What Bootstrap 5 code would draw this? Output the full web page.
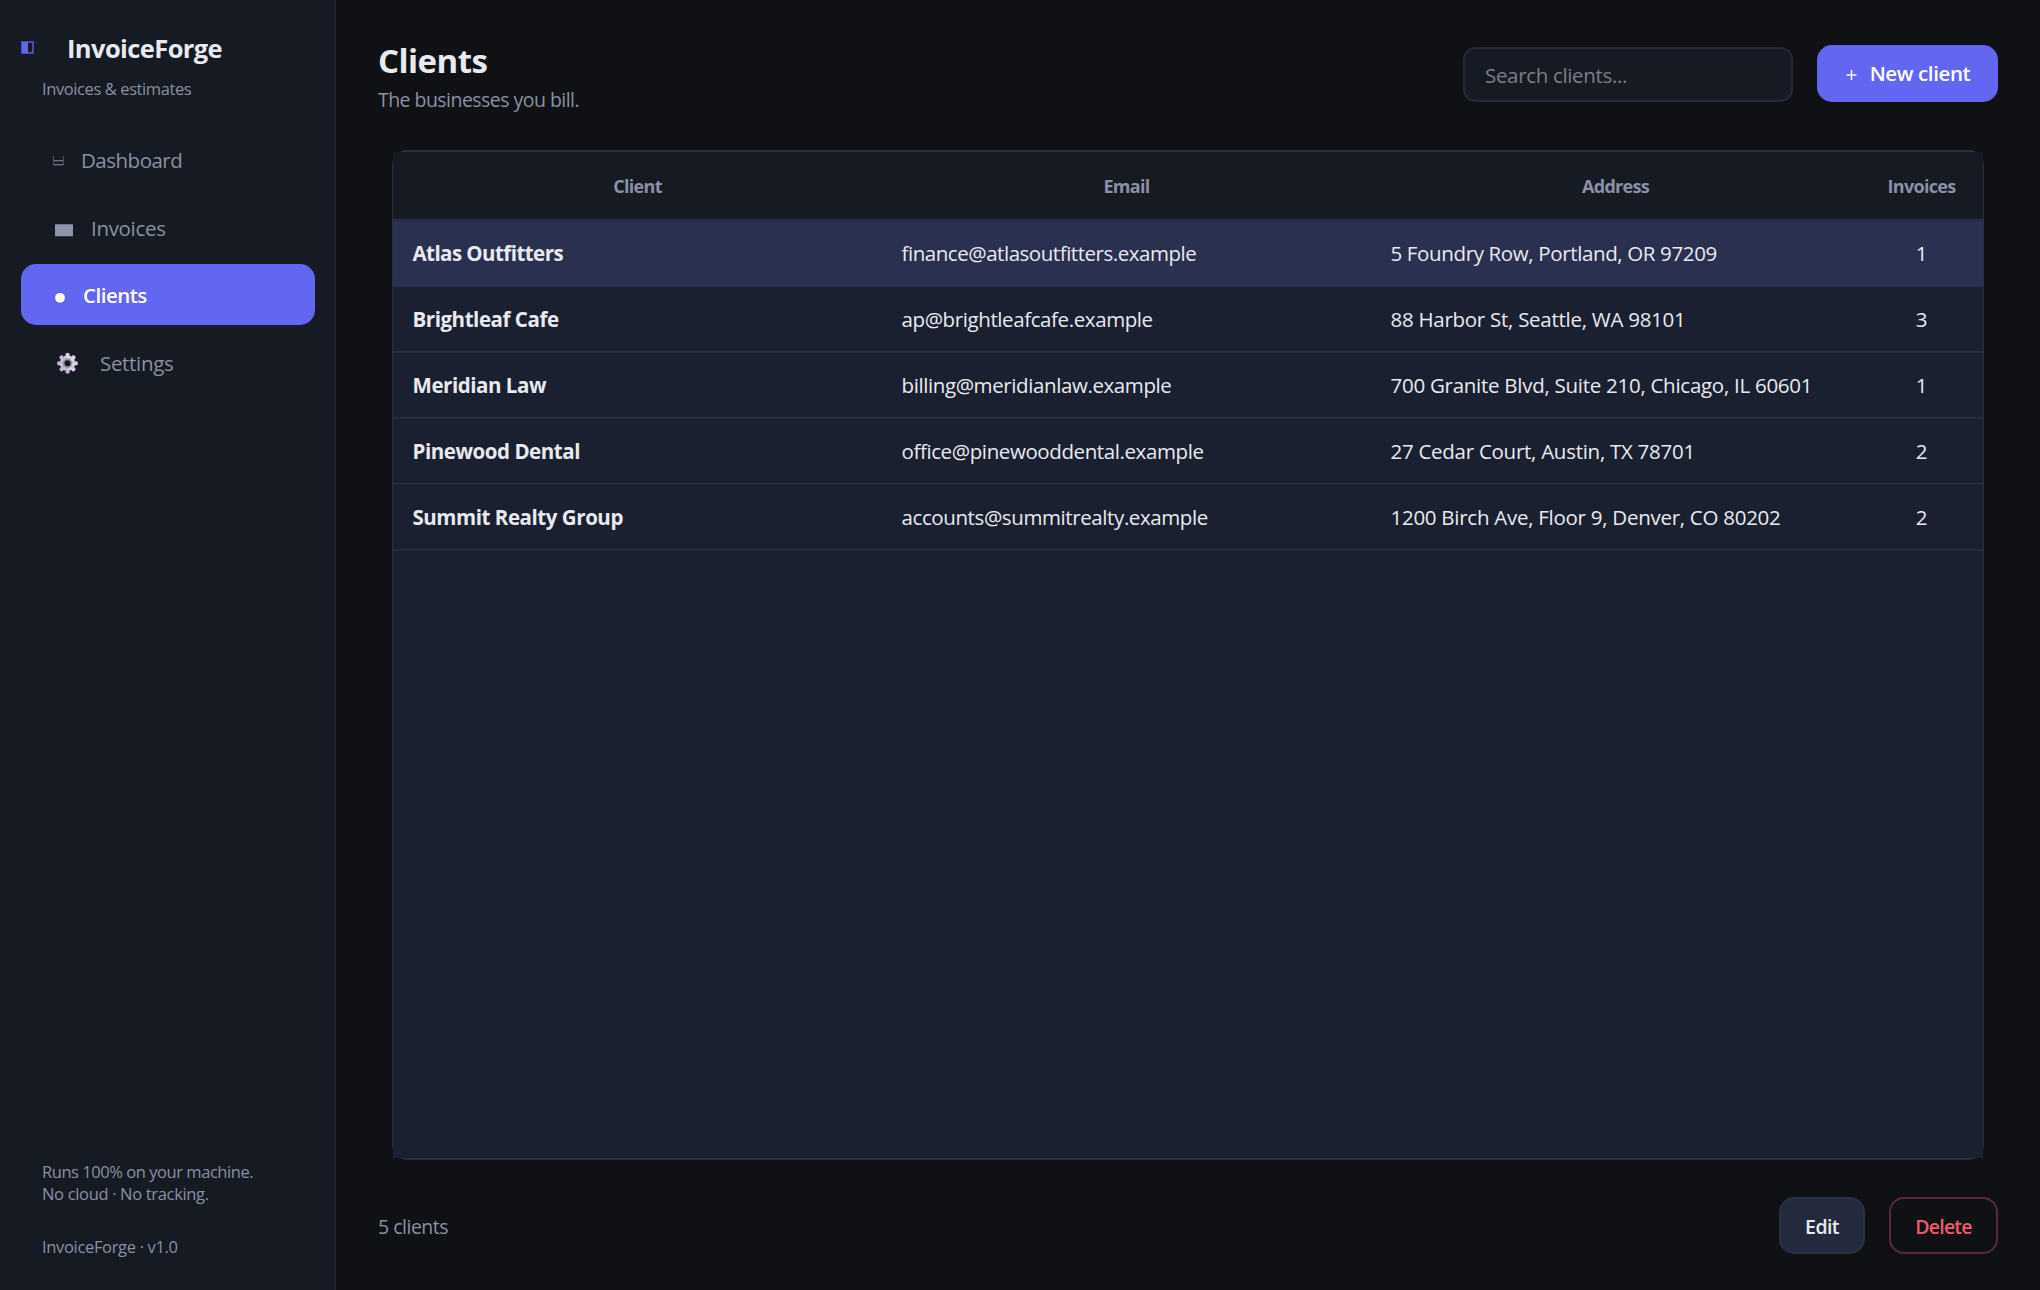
<!DOCTYPE html>
<html lang="en">
<head>
<meta charset="utf-8">
<meta name="viewport" content="width=device-width, initial-scale=1">
<title>InvoiceForge</title>
<link rel="stylesheet" href="https://cdn.jsdelivr.net/npm/bootstrap@5.3.0/dist/css/bootstrap.min.css">
<style>
  :root { --ink:#e8eaf0; --muted:#8b90a5; --line:#2a3042; --panel:#161a23; --accent:#6366f1; }
  body { background:#0f1115; color:var(--ink); font-family:"Open Sans","Noto Sans",sans-serif; font-size:20.5px; }
  .sidebar { width:336px; background:var(--panel); border-right:1px solid #232838; padding:30px 20px 32px 21px; }
  .brand-name { font-size:25.5px; font-weight:700; line-height:36px; letter-spacing:-.6px; }
  .brand-mark { width:46px; height:14px; }
  .fine { font-size:16.5px; line-height:22px; letter-spacing:-.45px; color:var(--muted); padding-left:21px; }
  .tagline { padding-top:12px; letter-spacing:-.4px; }
  .fine-loose { letter-spacing:-.33px; }
  .side-nav { margin-top:29px; gap:6px; }
  .side-nav .nav-link { height:61.5px; padding:1px 0 0 31px; color:var(--muted); line-height:30px; letter-spacing:-.32px; border-radius:15px; }
  .side-nav .nav-link:first-child { padding-top:0; letter-spacing:-.5px; }
  .side-nav .nav-link.active { height:61px; margin-bottom:.5px; padding-top:0; background:var(--accent); color:#fff; font-weight:600; letter-spacing:-.5px; }
  .page-pane { padding:0 42px 36px; }
  .page-head { height:150px; }
  .page-title { font-size:33px; font-weight:700; line-height:44px; letter-spacing:-.53px; padding-top:39px; margin:0; }
  .page-sub { font-size:19.5px; line-height:26px; letter-spacing:-.54px; color:var(--muted); padding-top:4px; }
  .controls { padding-top:45px; gap:24px; }
  .search { width:330px; height:55px; margin-top:2px; padding:0 20px; background:var(--panel)!important; border:2px solid #242a3a; border-radius:13px; font-size:20.5px; letter-spacing:-.33px; color:var(--ink); }
  .search::placeholder { color:#7b7e8a; opacity:1; }
  .btn { height:57px; border-radius:15px; font-weight:600; padding:0; line-height:1; }
  .btn-new { width:181px; background:var(--accent); color:#fff; font-size:20.5px; letter-spacing:-.38px; gap:13px; padding-left:1px; }
  .btn-edit { width:86px; background:#242a3d; border:2px solid #293044; color:var(--ink); font-size:19.5px; letter-spacing:-.6px; padding-top:2px; }
  .btn-del { width:109px; border:2px solid #5b2a34; color:#f2596b; font-size:19.5px; letter-spacing:-.75px; padding-top:2px; }
  .grid-frame { margin:0 14px; border:solid var(--line); border-width:2px 1px; border-radius:15px; }
  .grid-body { background:#1b2030; height:100%; }
  .clients { table-layout:fixed; margin:0; }
  .clients > :not(caption) > * > * { padding:0 0 0 19.5px; color:var(--ink); background:transparent; border:0; box-shadow:inset 0 -1px #242939, inset 0 -2px var(--line); }
  .clients > thead > tr > th { height:69px; padding:0 0 1px; background:var(--panel); color:var(--muted); font-size:18px; letter-spacing:-.7px; text-align:center; }
  .clients td { height:66px; line-height:30px; vertical-align:middle; padding-bottom:3px!important; letter-spacing:-.4px; }
  .clients td:nth-child(1) { font-weight:700; letter-spacing:-.45px; }
  .clients td:nth-child(3) { letter-spacing:-.27px; }
  .clients td:nth-child(4) { text-align:center; padding-left:0!important; }
  .clients .picked > td { background:#2a3050; box-shadow:inset 0 -2px #2b304c; letter-spacing:-.46px; }
  .clients .picked > td:first-child { letter-spacing:-.56px; }
  .clients .picked > td:nth-child(3) { letter-spacing:-.36px; }
  .page-foot { padding-top:37px; }
  .count { font-size:19.5px; letter-spacing:-.5px; color:var(--muted); padding-top:2px; }
</style>
<script src="https://cdn.jsdelivr.net/npm/bootstrap@5.3.0/dist/js/bootstrap.bundle.min.js"></script>
</head>
<body>
<div class="d-flex vh-100 overflow-hidden">
  <aside class="sidebar d-flex flex-column flex-shrink-0">
    <div class="d-flex align-items-center">
      <svg class="brand-mark" viewBox="0 0 46 14" shape-rendering="crispEdges"><path fill="#484bb0" d="M0 0h13v13H0z"/><path fill="#6366f1" d="M1 1h6v11H1z"/><path fill="#161a23" d="M7 2h4v9H7z"/></svg>
      <div class="brand-name">InvoiceForge</div>
    </div>
    <div class="fine tagline">Invoices &amp; estimates</div>
    <nav class="side-nav nav flex-column">
      <a class="nav-link d-flex align-items-center" href="#"><svg width="29" height="24" viewBox="0 0 29 24"><path stroke="#4d5163" d="M1.500 8v9.500M11.500 8v9.500"/><path stroke="#8b90a5" stroke-width="1.200" d="M2 12.750h9M2 16.750h9"/></svg>Dashboard</a>
      <a class="nav-link d-flex align-items-center" href="#"><svg width="39" height="24" viewBox="0 0 39 24"><path fill="#8f94ab" d="M3 8.250h18v12H3z"/></svg>Invoices</a>
      <a class="nav-link active d-flex align-items-center" href="#"><svg width="31" height="24" viewBox="0 0 31 24"><circle cx="8" cy="14.800" r="4.900" fill="#fff"/></svg>Clients</a>
      <a class="nav-link d-flex align-items-center" href="#"><svg width="48" height="24" viewBox="0 0 48 24">
        <defs><linearGradient id="gearFill" x1="1" y1="0" x2="0" y2="1"><stop stop-color="#ece6f2"/><stop offset="1" stop-color="#b5a3cb"/></linearGradient></defs>
        <g transform="translate(15.500 12.300)">
          <g fill="url(#gearFill)"><circle r="7.800"/>
          <rect x="-2" y="-10.300" width="4" height="20.600" rx="1.400"/><rect x="-2" y="-10.300" width="4" height="20.600" rx="1.400" transform="rotate(45)"/><rect x="-2" y="-10.300" width="4" height="20.600" rx="1.400" transform="rotate(90)"/><rect x="-2" y="-10.300" width="4" height="20.600" rx="1.400" transform="rotate(135)"/></g>
          <circle r="3.900" fill="#161a23" stroke="#9a90a6" stroke-width="1.800"/></g></svg>Settings</a>
    </nav>
    <div class="fine mt-auto">Runs 100% on your machine.<br><span class="fine-loose">No cloud · No tracking.</span></div>
    <div class="fine fine-loose" style="padding-top:31px">InvoiceForge · v1.0</div>
  </aside>
  <main class="page-pane d-flex flex-column flex-grow-1">
    <header class="page-head d-flex justify-content-between align-items-start flex-shrink-0">
      <div>
        <h1 class="page-title">Clients</h1>
        <div class="page-sub">The businesses you bill.</div>
      </div>
      <div class="controls d-flex align-items-start">
        <input class="search form-control shadow-none" type="text" placeholder="Search clients...">
        <button class="btn btn-new d-flex align-items-center justify-content-center" type="button"><svg width="11" height="12" viewBox="0 0 11 12"><path stroke="#fff" stroke-width="1.500" d="M.5 7h10M5.500 2v10"/></svg>New client</button>
      </div>
    </header>
    <section class="grid-frame flex-grow-1">
      <div class="grid-body">
        <table class="clients table">
          <colgroup><col style="width:489px"><col style="width:489px"><col style="width:489px"><col></colgroup>
          <thead><tr><th class="align-middle">Client</th><th class="align-middle">Email</th><th class="align-middle">Address</th><th class="align-middle">Invoices</th></tr></thead>
          <tbody>
            <tr class="picked"><td>Atlas Outfitters</td><td>finance@atlasoutfitters.example</td><td>5 Foundry Row, Portland, OR 97209</td><td>1</td></tr>
            <tr><td>Brightleaf Cafe</td><td>ap@brightleafcafe.example</td><td>88 Harbor St, Seattle, WA 98101</td><td>3</td></tr>
            <tr><td>Meridian Law</td><td>billing@meridianlaw.example</td><td>700 Granite Blvd, Suite 210, Chicago, IL 60601</td><td>1</td></tr>
            <tr><td>Pinewood Dental</td><td>office@pinewooddental.example</td><td>27 Cedar Court, Austin, TX 78701</td><td>2</td></tr>
            <tr><td>Summit Realty Group</td><td>accounts@summitrealty.example</td><td>1200 Birch Ave, Floor 9, Denver, CO 80202</td><td>2</td></tr>
          </tbody>
        </table>
      </div>
    </section>
    <footer class="page-foot d-flex align-items-center">
      <div class="count me-auto">5 clients</div>
      <button class="btn btn-edit me-4" type="button">Edit</button>
      <button class="btn btn-del" type="button">Delete</button>
    </footer>
  </main>
</div>
</body>
</html>
